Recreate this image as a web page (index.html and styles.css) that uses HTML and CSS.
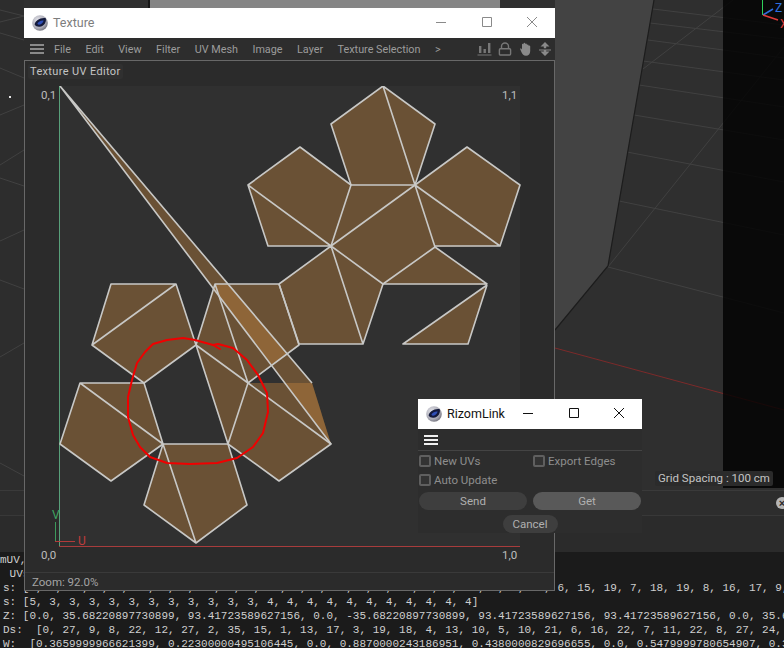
FILE: index.html
```html
<!DOCTYPE html>
<html lang="en">
<head>
<meta charset="utf-8">
<title>Texture UV Editor</title>
<link rel="stylesheet" href="styles.css">
</head>
<body>
<svg class="defs" width="0" height="0" aria-hidden="true">
  <defs>
    <radialGradient id="c4dBall" cx="38%" cy="35%" r="70%">
      <stop offset="0" stop-color="#e8e8ee"/>
      <stop offset=".7" stop-color="#a9a9b4"/>
      <stop offset="1" stop-color="#6e6e78"/>
    </radialGradient>
    <symbol id="c4d" viewBox="0 0 16 16">
      <circle cx="8" cy="8" r="7.8" fill="url(#c4dBall)"/>
      <path d="M2.6 9.6C3.2 5.8 8 2.4 13.8 3.2C14.6 6.6 12.4 11.4 7.6 11.8C5.4 12 3.6 11.2 2.6 9.6Z" fill="#141a3c"/>
      <path d="M5.4 8.8C6.2 6.6 9 5.2 11.6 5.6C11.2 7.6 9.4 9.6 7.2 9.8C6.4 9.8 5.8 9.4 5.4 8.8Z" fill="#2f4fb8"/>
    </symbol>
  </defs>
</svg>
<div class="desktop">
  <div class="viewport">
    <svg class="scene" width="784" height="490" viewBox="0 0 784 490">
      <rect width="784" height="490" fill="#2f2f2f"/>
      <rect width="24" height="490" fill="#2d2d2d"/>
      <rect x="150" width="350" height="8" fill="#858585"/>
      <rect x="148" width="2" height="8" fill="#161616"/>
      <polygon points="555,0 654,0 608,266 555,330" fill="#434343"/>
      <g class="grid">
        <path d="M653 9L784 25M650 23L784 39M648 40L784 58M643 61L784 80M639 85L784 107M634 115L784 140M627 152L784 182M619 201L784 235M608 267L784 313"/>
        <path d="M643 69L733 0M608 267L784 47"/>
        <path d="M0 10L24 16M0 22L24 16M0 33L24 40M0 68L24 78M0 115L24 105M0 165L24 150M0 178L24 186M0 241L24 230M0 280L24 289M0 357L24 343M0 463L24 476"/>
      </g>
      <path class="edge" d="M654 0L608 266L555 330"/>
      <path class="redaxis" d="M555 348L784 410"/>
      <rect x="723" width="61" height="488" fill="#000" opacity=".8"/>
      <rect x="9" y="96" width="2" height="2" fill="#e8e8e8"/>
      <path d="M762.5 0V15" stroke="#2fd05a" fill="none"/>
      <path d="M763 15L773 9" stroke="#2f6fe0" stroke-width="1.5" fill="none"/>
      <path d="M763 15L778 20" stroke="#e03a3a" stroke-width="1.5" fill="none"/>
      <text class="gizmo" x="775" y="12" fill="#2f6fe0">Z</text>
      <text class="gizmo" x="780" y="28" fill="#e03a3a">X</text>
    </svg>
    <div class="gridlabel">Grid Spacing : 100 cm</div>
  </div>
  <div class="strip strip-a"><span class="closedot">×</span></div>
  <div class="strip strip-b"></div>
  <pre class="console"><span class="nudge">mUV,</span>
 UVs
s: [0, 1, 10, 1, 2, 11, 2, 3, 12, 3, 4, 13, 4, 0, 14, 5, 9, 15, 6, 5, 16, 7, 6, 17, 6, 15, 19, 7, 18, 19, 8, 16, 17, 9, 18, 15, 9, 17]
s: [5, 3, 3, 3, 3, 3, 3, 3, 3, 3, 3, 3, 4, 4, 4, 4, 4, 4, 4, 4, 4, 4, 4]
Z: [0.0, 35.68220897730899, 93.41723589627156, 0.0, -35.68220897730899, 93.41723589627156, 93.41723589627156, 0.0, 35.68220897730899
Ds:  [0, 27, 9, 8, 22, 12, 27, 2, 35, 15, 1, 13, 17, 3, 19, 18, 4, 13, 10, 5, 10, 21, 6, 16, 22, 7, 11, 22, 8, 27, 24, 9
W:  [0.3659999966621399, 0.22300000495106445, 0.0, 0.8870000243186951, 0.4380000829696655, 0.0, 0.5479999780654907, 0.3</pre>

  <section class="win texture">
    <header class="titlebar">
      <svg class="logo"><use href="#c4d"/></svg>
      <span class="title">Texture</span>
      <div class="controls">
        <svg width="12" height="12" viewBox="0 0 12 12"><path d="M1 6.5H11"/></svg>
        <svg width="12" height="12" viewBox="0 0 12 12"><path d="M1.5 1.5H10.5V10.5H1.5Z"/></svg>
        <svg width="12" height="12" viewBox="0 0 12 12"><path d="M1 1L11 11M11 1L1 11"/></svg>
      </div>
    </header>
    <nav class="menubar">
      <span class="burger"><i></i><i></i><i></i></span>
      <span>File</span><span>Edit</span><span>View</span><span>Filter</span><span>UV Mesh</span><span>Image</span><span>Layer</span><span>Texture Selection</span><span>&gt;</span>
      <div class="tools">
        <svg width="15" height="14" viewBox="0 0 15 14"><path d="M2 4H4.4V11H2ZM6.5 7H8.9V11H6.5ZM11 1H13.4V11H11ZM0.5 12.4H14.5V13.6H0.5Z" fill="#777"/></svg>
        <svg width="14" height="14" viewBox="0 0 14 14"><path d="M3.5 6.5V4.5A3.5 3.5 0 0 1 10.5 4.5V6.5" fill="none" stroke="#777" stroke-width="1.4"/><rect x="1.4" y="6.8" width="11.2" height="6.2" rx="1" fill="none" stroke="#777" stroke-width="1.4"/></svg>
        <svg width="14" height="14" viewBox="0 0 14 14"><path d="M1 6.8C1.6 6 2.6 6.6 3 7.6V2.6C3 1.6 4.4 1.6 4.5 2.6V1.4C4.6.4 6.1.4 6.2 1.4V2C6.4 1.1 7.8 1.2 7.9 2.2V3C8.1 2.2 9.6 2.2 9.6 3.2V4C9.8 3.2 11.2 3.3 11.2 4.3V9C11.2 12 9.6 13.8 7 13.8C4.4 13.8 3.6 12 2.6 10.4Z" fill="#8a8a8a" transform="translate(1 0)"/></svg>
        <svg width="14" height="14" viewBox="0 0 14 14"><path d="M7 0L11.5 4.6H8.2V6.2H5.8V4.6H2.5ZM1 7.4H13V8.6H8.2V9.6H11.5L7 14L2.5 9.6H5.8V8.6H1Z" fill="#8a8a8a"/></svg>
      </div>
    </nav>
    <div class="editor">
      <div class="editor-head"><span class="editor-label">Texture UV Editor</span></div>
      <svg class="uv" width="529" height="486" viewBox="25 86 529 486">
        <rect x="25" y="86" width="529" height="486" fill="#2b2b2b"/>
        <rect x="59" y="86" width="461" height="460" fill="#303030"/>
        <path d="M59.5 86V546" stroke="#58a07a" fill="none"/>
        <path d="M59 546.5H520" stroke="#a83c3c" fill="none"/>

        <g class="face">
          <polygon points="383,86 435,124 415,185 351,185 331,124"/>
          <polygon points="248,185 300,147 351,185 331,246 268,246"/>
          <polygon points="351,185 415,185 435,247 383,284 331,246"/>
          <polygon points="415,185 467,147 520,185 500,246 435,247"/>
          <polygon points="279,284 331,246 383,284 363,344 299,344"/>
          <polygon points="383,284 435,247 487,285"/>
          <polygon points="403,344 468,344 487,285"/>
          <polygon points="111,284 176,284 196,345 144,383 92,345"/>
          <polygon points="80,383 144,383 163,444 111,481 60,444"/>
          <polygon points="163,444 228,444 247,505 196,543 144,505"/>
          <polygon points="215,284 279,284 299,345 248,383 196,345"/>
          <polygon points="196,345 248,383 228,444"/>
          <polygon points="228,444 248,383 312,383 331,444 279,481"/>
          <polygon points="60,86 312,383 331,444"/>
        </g>
        <g class="mesh">
          <path d="M331 124L383 86L435 124L415 185H351ZM383 86L415 185"/>
          <path d="M248 185L300 147L351 185L331 246H268ZM248 185L331 246"/>
          <path d="M331 246L415 185L435 247L383 284ZM415 185L467 147L520 185L500 246H435M415 185L500 246"/>
          <path d="M279 284L331 246M331 246L363 344M383 284L363 344H299L279 284"/>
          <path d="M383 284H487L435 247M487 285L403 344H468L487 285"/>
          <path d="M111 284H176L196 345L144 383L92 345ZM92 345L176 284"/>
          <path d="M80 383H144L163 444L111 481L60 444ZM80 383L163 444"/>
          <path d="M163 444H228L247 505L196 543L144 505ZM163 444L196 543"/>
          <path d="M279 284H215L196 345M279 284L299 345L248 383L196 345L228 444L248 383L215 284"/>
          <path d="M248 383L331 444L279 481L228 444"/>
          <path d="M60 86L312 383M60 86L331 444"/>
        </g>
        <polyline class="scribble" points="220,349 213,345 218,344 233,348 247,360 258,375 267,393 268,412 263,433 253,447 237,458 217,463 190,464 167,463 150,457 140,447 133,435 128,417 128,397 132,380 137,363 145,352 153,344 167,340 183,338 195,340 213,345"/>
        <path d="M55.5 522V541.5" stroke="#3c9a5c" fill="none"/>
        <path d="M55 541.5H75" stroke="#b23a3a" fill="none"/>
        <text class="axis" x="52" y="519" fill="#3fa562">V</text>
        <text class="axis" x="78" y="545" fill="#c23c3c">U</text>
        <text class="corner" x="41" y="99">0,1</text>
        <text class="corner" x="502" y="99">1,1</text>
        <text class="corner" x="41" y="559">0,0</text>
        <text class="corner" x="502" y="559">1,0</text>
      </svg>
      <footer class="editor-foot">Zoom: 92.0%</footer>
    </div>
  </section>

  <section class="win rizom">
    <header class="titlebar">
      <svg class="logo"><use href="#c4d"/></svg>
      <span class="title">RizomLink</span>
      <div class="controls">
        <svg width="12" height="12" viewBox="0 0 12 12"><path d="M1 6.5H11"/></svg>
        <svg width="12" height="12" viewBox="0 0 12 12"><path d="M1.5 1.5H10.5V10.5H1.5Z"/></svg>
        <svg width="12" height="12" viewBox="0 0 12 12"><path d="M1 1L11 11M11 1L1 11"/></svg>
      </div>
    </header>
    <div class="rizom-menu"><span class="burger"><i></i><i></i><i></i></span></div>
    <div class="rizom-body">
      <label class="check"><i></i>New UVs</label>
      <label class="check"><i></i>Export Edges</label>
      <label class="check"><i></i>Auto Update</label>
      <span></span>
      <button class="btn">Send</button>
      <button class="btn btn-on">Get</button>
      <button class="btn btn-cancel">Cancel</button>
    </div>
  </section>
</div>
</body>
</html>
```
FILE: styles.css
```css
* { box-sizing: border-box; }
html, body { margin: 0; padding: 0; background: #1b1b1b; overflow: hidden; }
.defs { position: absolute; }
.desktop {
  position: relative;
  width: 784px;
  height: 648px;
  overflow: hidden;
  display: flex;
  flex-direction: column;
  font-family: Roboto, "Open Sans", sans-serif;
}

/* 3D viewport */
.viewport { position: relative; flex: none; height: 490px; }
.scene { display: block; }
.grid path { fill: none; stroke: #414141; stroke-width: 1; }
.edge { fill: none; stroke: #1c1c1c; stroke-width: 1.2; }
.redaxis { fill: none; stroke: #7c2a2a; stroke-width: 1; }
.gizmo { font: 12px Roboto, sans-serif; }
.gridlabel {
  position: absolute;
  left: 655px;
  top: 471px;
  height: 15px;
  padding: 0 3px;
  background: #2b2b2b;
  border-radius: 2px;
  color: #c4c4c4;
  font-size: 11.5px;
  line-height: 15px;
  white-space: nowrap;
}

/* strips under viewport */
.strip { flex: none; display: flex; align-items: center; justify-content: flex-end; background: #2d2d2d; border-top: 1px solid #3a3a3a; }
.strip-a { height: 25px; }
.strip-b { height: 37px; background: #2b2b2b; border-top-color: #383838; }
.closedot {
  width: 12px;
  height: 12px;
  margin-right: -4px;
  border-radius: 50%;
  background: #b5b5b5;
  color: #2d2d2d;
  font: bold 11px/12px "Liberation Sans", sans-serif;
  text-align: center;
}

/* console */
.console {
  flex: 1;
  margin: 0;
  padding: 1px 0 0 3px;
  background: #1b1b1b;
  color: #cfcfcf;
  font: 11px/14px "Liberation Mono", monospace;
  overflow: hidden;
  white-space: pre;
}
.nudge { margin-left: -3px; }

/* windows */
.win { position: absolute; display: flex; flex-direction: column; }
.texture { left: 24px; top: 8px; width: 531px; height: 583px; background: #2d2d2d; }
.rizom { left: 418px; top: 399px; width: 224px; height: 134px; background: #2d2d2d; }
.titlebar { flex: none; height: 30px; display: flex; align-items: center; background: #fff; }
.logo { width: 16px; height: 16px; margin-left: 8px; flex: none; }
.title { margin: -1px 0 0 5px; font-size: 12.5px; color: #7d7d7d; }
.controls { margin: -2px 0 0 auto; display: flex; }
.controls svg { display: block; fill: none; stroke: #8a8a8a; stroke-width: 1; }

.texture .controls { gap: 33.5px; margin-right: 17px; }
.rizom .title { color: #111; }
.rizom .controls { gap: 33.5px; margin-right: 17px; }
.rizom .controls svg { stroke: #111; }

.burger { display: flex; flex-direction: column; justify-content: space-between; width: 14px; height: 10px; flex: none; }
.burger i { display: block; height: 2px; background: #8a8a8a; }

.menubar {
  flex: none;
  height: 22px;
  display: flex;
  align-items: center;
  gap: 14.5px;
  padding: 0 3px 0 6px;
  color: #9c9c9c;
  font-size: 10.8px;
  white-space: nowrap;
}
.menubar .burger { margin-right: -4.5px; }
.tools { margin-left: auto; display: flex; align-items: center; gap: 6px; }
.tools svg { display: block; }

.editor {
  flex: 1;
  min-height: 0;
  display: flex;
  flex-direction: column;
  border: 1px solid #686868;
  background: #2b2b2b;
}
.editor-head { flex: none; height: 25px; display: flex; align-items: flex-start; padding: 3px 0 0 3px; }
.editor-label {
  height: 15px;
  padding: 0 2px;
  border-radius: 2px;
  background: #303030;
  color: #c4c4c4;
  font-size: 11px;
  line-height: 15px;
  letter-spacing: .35px;
}
.uv { display: block; flex: none; }
.face polygon { fill: rgba(199, 135, 61, .39); }
.mesh path { fill: none; stroke: #c8c8c6; stroke-width: 1.6; stroke-linejoin: round; }
.scribble { fill: none; stroke: #f00000; stroke-width: 2; stroke-linejoin: round; stroke-linecap: round; }
.axis { font: 12px Roboto, sans-serif; }
.corner { font: 11.5px Roboto, sans-serif; fill: #bdbdbd; }
.editor-foot {
  flex: 1;
  padding: 2px 0 0 7px;
  border-top: 1px solid #3a3a3a;
  color: #a4a4a4;
  font-size: 11.5px;
  line-height: 15px;
}

/* RizomLink */
.rizom-menu { flex: none; height: 22px; display: flex; align-items: center; padding-left: 6px; border-bottom: 1px solid #444; }
.rizom-menu .burger i { background: #f0f0f0; }
.rizom-body {
  flex: 1;
  display: grid;
  grid-template-columns: 108px 108px;
  grid-auto-rows: auto;
  column-gap: 6px;
  align-content: start;
  padding: 3px 1px 0;
}
.check {
  display: flex;
  align-items: center;
  gap: 3px;
  height: 11px;
  margin-top: 1px;
  margin-bottom: 7px;
  color: #8e8e8e;
  font-size: 11.5px;
  white-space: nowrap;
}
.check i { flex: none; width: 12px; height: 12px; border: 2px solid #5f5f5f; border-radius: 2px; background: #333; }
.btn {
  height: 18px;
  margin-top: 0;
  padding: 0;
  border: 0;
  border-radius: 9px;
  background: #3e3e3e;
  color: #b0b0b0;
  font: 11.5px/18px Roboto, sans-serif;
}
.btn-on { background: #595959; }
.btn-cancel {
  grid-column: 1 / -1;
  justify-self: center;
  width: 55px;
  margin-top: 5px;
}
```
